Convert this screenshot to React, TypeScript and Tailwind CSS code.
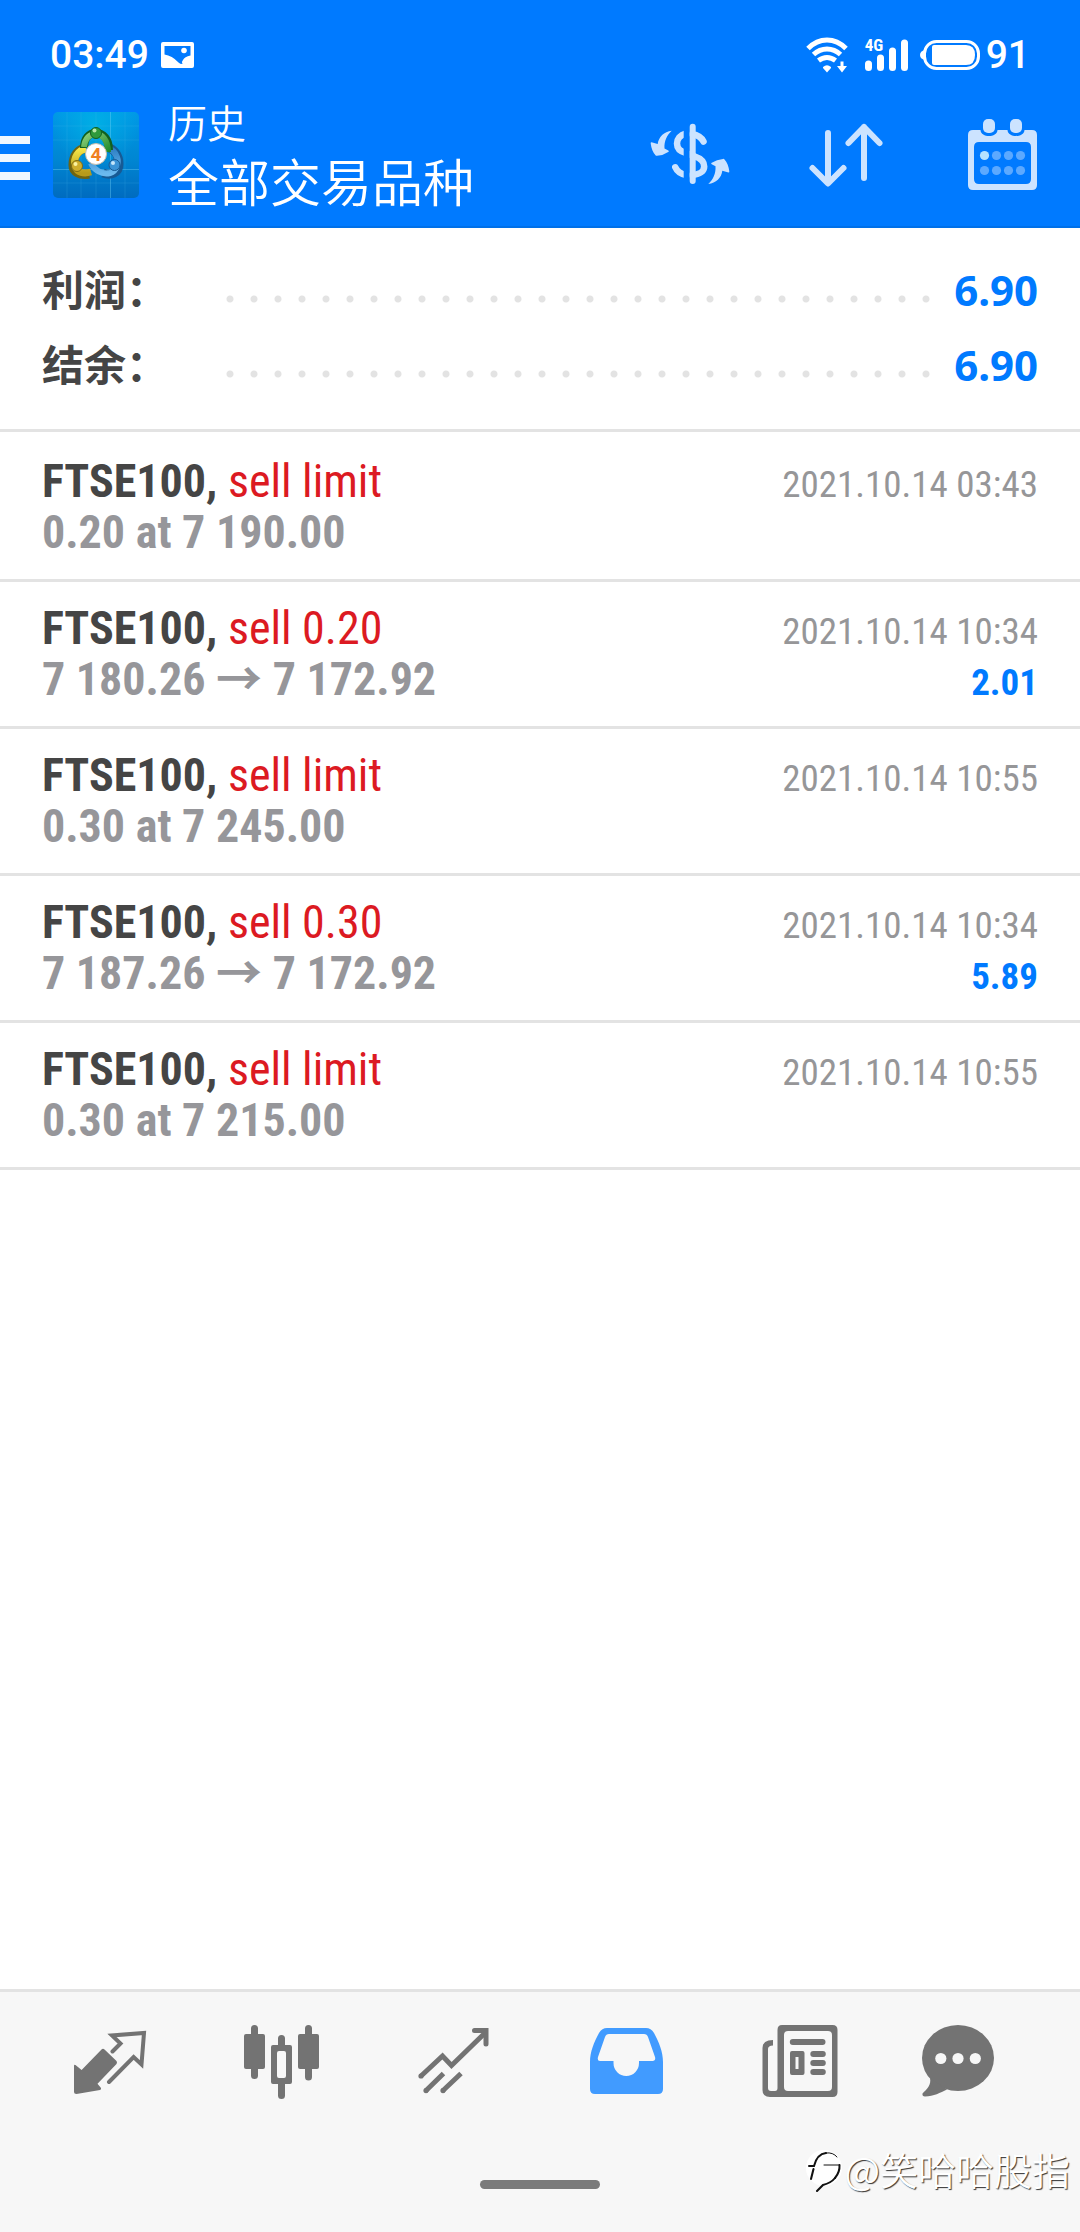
import type { ReactNode } from "react";

type Deal = {
  symbol: string;
  action: string;
  detail: string[];
  time: string;
  profit?: string;
};

const summary = [
  { label: "利润：", value: "6.90" },
  { label: "结余：", value: "6.90" },
];

const deals: Deal[] = [
  { symbol: "FTSE100,", action: "sell limit", detail: ["0.20 at 7 190.00"], time: "2021.10.14 03:43" },
  { symbol: "FTSE100,", action: "sell 0.20", detail: ["7 180.26", "7 172.92"], time: "2021.10.14 10:34", profit: "2.01" },
  { symbol: "FTSE100,", action: "sell limit", detail: ["0.30 at 7 245.00"], time: "2021.10.14 10:55" },
  { symbol: "FTSE100,", action: "sell 0.30", detail: ["7 187.26", "7 172.92"], time: "2021.10.14 10:34", profit: "5.89" },
  { symbol: "FTSE100,", action: "sell limit", detail: ["0.30 at 7 215.00"], time: "2021.10.14 10:55" },
];

function StatusBar() {
  return (
    <div className="flex h-[76px] items-center justify-between px-[50px] pt-[34px] font-['Roboto',sans-serif] text-[39px] leading-[42px] font-medium text-white">
      <div className="flex items-center gap-3">
        <span>03:49</span>
        <svg viewBox="0 0 33 26" className="h-[26px] w-[33px]" aria-hidden="true">
          <path
            fillRule="evenodd"
            fill="#fff"
            d="M2 0H31Q33 0 33 2V24Q33 26 31 26H2Q0 26 0 24V2Q0 0 2 0ZM3.500 4V12.500Q11 13.500 17.500 20.500Q19 22 21.500 22Q20 20 22 18Q23.500 14.500 29.500 13.500V4Z"
          />
          <circle cx="23" cy="8.500" r="2.800" fill="#fff" />
        </svg>
      </div>
      <div className="flex items-center">
        <svg viewBox="0 0 42 36" className="h-9 w-[42px]" aria-hidden="true">
          <g fill="none" stroke="#fff" strokeWidth="5">
            <path d="M2 11.500Q10.500 3 21 3T40 11.500" />
            <path d="M7.500 17.500Q13.500 12 21 12T34.500 17.500" />
            <path d="M12.500 23.500Q16.500 20.500 21 20.500T29.500 23.500" />
          </g>
          <path d="M17 30Q21 26.500 25 30V31L21 35.500L17 31Z" fill="#fff" />
          <path d="M34.500 24.500H37.500V29H41L36 35.500L31 29H34.500Z" fill="#fff" />
        </svg>
        <div className="relative ml-[17px]">
          <svg viewBox="0 0 44 34" className="h-[34px] w-[44px]" aria-hidden="true">
            <g stroke="#fff" strokeWidth="7" strokeLinecap="round">
              <path d="M3.500 26V29.500" />
              <path d="M15.500 20V29.500" />
              <path d="M27.500 13V29.500" />
              <path d="M39.500 5V29.500" />
            </g>
          </svg>
          <span className="absolute top-0 left-0 font-['Roboto_Condensed',sans-serif] text-[17px] leading-[14px] font-bold">
            4G
          </span>
        </div>
        <svg viewBox="0 0 60 30" className="ml-[11px] h-[30px] w-[60px]" aria-hidden="true">
          <rect x="4.500" y="1.500" width="54" height="27" rx="12" fill="none" stroke="#fff" strokeWidth="3" />
          <path d="M5 10Q0 11 0 15T5 20Z" fill="#fff" />
          <path d="M14 5H46Q55 5 55 15T46 25H14Q12 25 12 23V7Q12 5 14 5Z" fill="#fff" />
        </svg>
        <span className="ml-[6px]">91</span>
      </div>
    </div>
  );
}

function AppLogo() {
  return (
    <svg viewBox="0 0 86 86" className="ml-[23px] size-[86px] shrink-0" role="img" aria-label="MetaTrader 4">
      <defs>
        <linearGradient id="tile" x1="0" y1="0" x2="0" y2="1">
          <stop offset="0" stopColor="#0099e6" />
          <stop offset="0.550" stopColor="#0086d2" />
          <stop offset="1" stopColor="#006bbf" />
        </linearGradient>
        <radialGradient id="glow" cx="0.500" cy="0.150" r="0.500">
          <stop offset="0" stopColor="#00c0e8" stopOpacity="0.600" />
          <stop offset="1" stopColor="#00c0e8" stopOpacity="0" />
        </radialGradient>
        <linearGradient id="green" x1="0" y1="0" x2="1" y2="1">
          <stop offset="0" stopColor="#8fd07a" />
          <stop offset="1" stopColor="#1f8a2c" />
        </linearGradient>
        <linearGradient id="yellow" x1="0" y1="0" x2="0" y2="1">
          <stop offset="0" stopColor="#f5e648" />
          <stop offset="1" stopColor="#b79a1a" />
        </linearGradient>
        <linearGradient id="sky" x1="0" y1="0" x2="0" y2="1">
          <stop offset="0" stopColor="#2c7fc4" />
          <stop offset="1" stopColor="#6bb9ee" />
        </linearGradient>
      </defs>
      <rect width="86" height="86" rx="5" fill="url(#tile)" />
      <rect width="86" height="86" rx="5" fill="url(#glow)" />
      <path d="M14 0V86M28 0V86M43 0V86M72 0V86M0 14H86M0 28H86M0 71H86" stroke="#46b4ea" strokeOpacity="0.200" />
      <path d="M57.500 0V86M0 57.500H86" stroke="#6fd0f5" strokeOpacity="0.400" />
      <g fill="none">
        <path d="M50 61C58 64 66 61 66 52C66 43 61 37 54 35" stroke="#175a94" strokeWidth="9" />
        <path d="M38 51C41 58 49 63 57 61C64 59 66 50 64 45C62 40 59 37 54 36" stroke="url(#sky)" strokeWidth="6" />
        <path d="M36 62C27 64 20 60 20 53C20 44 25 37 33 36" stroke="#6d6413" strokeWidth="9" />
        <path d="M33 37C25 38 20 46 22 54C24 61 31 62 38 60" stroke="url(#yellow)" strokeWidth="7" />
        <path d="M31 36C31 26 36 21 43 21S56 27 56 38" stroke="#12601f" strokeWidth="8" />
        <path d="M31 35C32 26 37 22 43 22S55 28 55 40" stroke="url(#green)" strokeWidth="6" />
      </g>
      <circle cx="43" cy="21" r="5.500" fill="#2f9a3c" stroke="#12601f" />
      <circle cx="41.500" cy="18.500" r="2" fill="#b8e6a8" />
      <circle cx="24" cy="54" r="5.500" fill="#cfae2c" stroke="#7d6b14" />
      <circle cx="22.500" cy="52" r="2" fill="#fbf3a0" />
      <circle cx="61.500" cy="53" r="5.500" fill="#3b93d6" stroke="#175a94" />
      <circle cx="60" cy="51" r="2" fill="#c6e6fa" />
      <circle cx="43" cy="42" r="10.500" fill="#fff" stroke="#c9bfae" />
      <text x="43" y="49" textAnchor="middle" fontFamily="Roboto, sans-serif" fontSize="19" fontWeight="700" fill="#f08022">
        4
      </text>
    </svg>
  );
}

function HeaderButton({ label, viewBox, children }: { label: string; viewBox: string; children: ReactNode }) {
  return (
    <button type="button" aria-label={label} className="flex w-[156px] justify-center">
      <svg viewBox={viewBox} className="size-[90px]" aria-hidden="true">
        {children}
      </svg>
    </button>
  );
}

function TitleBar() {
  return (
    <div className="flex h-[152px] items-center border-b-2 border-[#0070e8] pt-2">
      <button type="button" aria-label="菜单" className="shrink-0">
        <svg viewBox="0 0 30 90" className="h-[90px] w-[30px]" aria-hidden="true">
          <path d="M0 26H30V34H0ZM0 44H30V52H0ZM0 62H30V70H0Z" fill="#f0f7ff" />
        </svg>
      </button>
      <AppLogo />
      <h1 className="ml-[29px] flex flex-1 flex-col font-['Roboto','Noto_Sans_CJK_SC',sans-serif] font-[350] text-white">
        <span className="text-[39px] leading-[60px]">历史</span>
        <span className="text-[51px] leading-[60px]">全部交易品种</span>
      </h1>
      <div className="flex shrink-0">
        <HeaderButton label="资金" viewBox="5 0 90 90">
          <defs>
            <clipPath id="dollar-halves">
              <path d="M0 0H43.700V90H0ZM49.700 0H100V90H49.700Z" />
            </clipPath>
          </defs>
          <g clipPath="url(#dollar-halves)" fill="none" stroke="#cce3ff" strokeWidth="6.500" strokeLinecap="round">
            <path d="M63.500 31.500Q60.500 25.500 52 24" />
            <path d="M46 23.500C40 25 37 29 37 33.500C37 38 40 41.500 46 43L55 46.500C61 48.500 64.200 52 64.200 56.500C64.200 61 60 64.500 52 65" />
            <path d="M35.300 57.300Q38 63.500 46 65" />
          </g>
          <path d="M52.700 16.700V71" stroke="#cce3ff" strokeWidth="6" strokeLinecap="round" />
          <g fill="#cce3ff">
            <path id="swap" d="M31.700 20.700C24 21.500 18.500 27 17.700 34L11.500 32.300Q10.500 32.300 10.700 33.500C11.300 38.500 13 42.500 15.500 45.200Q16 46 17 45.800Q23 45.500 28.700 41.700Q29 41 28.300 40.500L24.500 38.500C24 31 27 25 31.700 20.700Z" />
            <use href="#swap" transform="rotate(180 50 47.350)" />
          </g>
        </HeaderButton>
        <HeaderButton label="排序" viewBox="1 0 90 90">
          <g fill="none" stroke="#cce3ff" strokeWidth="6" strokeLinecap="round" strokeLinejoin="round">
            <path d="M28 23V73M12.500 58L28 73.500L43.500 58" />
            <path d="M64 68V17M48.500 33L64 17L79.500 33" />
          </g>
        </HeaderButton>
        <HeaderButton label="日期" viewBox="-3 0 90 90">
          <path
            fillRule="evenodd"
            fill="#cce3ff"
            d="M13 20H20.500C21 28 37 28 37.500 20H47.500C48 28 64 28 64.500 20H72Q77 20 77 25V75Q77 80 72 80H13Q8 80 8 75V25Q8 20 13 20ZM19 32Q14 32 14 37V69Q14 74 19 74H66Q71 74 71 69V37Q71 32 66 32Z"
          />
          <rect x="23" y="9" width="12" height="14" rx="5" fill="#cce3ff" />
          <rect x="50" y="9" width="12" height="14" rx="5" fill="#cce3ff" />
          <circle cx="24.500" cy="45.500" r="4.600" fill="#b5e2ff" />
          <g fill="#5ca9ff">
            <circle cx="36.500" cy="45.500" r="4.600" />
            <circle cx="48.500" cy="45.500" r="4.600" />
            <circle cx="60.500" cy="45.500" r="4.600" />
            <circle cx="24.500" cy="60.500" r="4.600" />
            <circle cx="36.500" cy="60.500" r="4.600" />
            <circle cx="48.500" cy="60.500" r="4.600" />
            <circle cx="60.500" cy="60.500" r="4.600" />
          </g>
        </HeaderButton>
      </div>
    </div>
  );
}

function DealRow({ deal }: { deal: Deal }) {
  return (
    <li className="border-b-[3px] border-[#e3e3e3] px-[42px] py-[21px] font-['Roboto_Condensed',sans-serif] text-[46px] leading-[51px]">
      <div className="flex h-[51px] items-baseline justify-between">
        <span>
          <span className="font-bold text-[#454545]">{deal.symbol}</span>{" "}
          <span className="text-[#dc1a22]">{deal.action}</span>
        </span>
        <time className="text-[37px] text-[#969698]">{deal.time}</time>
      </div>
      <div className="flex h-[51px] items-baseline justify-between font-bold">
        <span className="text-[#96969a]">
          {deal.detail[0]}
          {deal.detail[1] && (
            <>
              {" "}
              <span className="font-['Noto_Sans_CJK_SC',sans-serif] leading-[0]">→</span> {deal.detail[1]}
            </>
          )}
        </span>
        {deal.profit && <span className="text-[37px] text-[#007aff]">{deal.profit}</span>}
      </div>
    </li>
  );
}

function NavItem({ label, active, children }: { label: string; active?: boolean; children: ReactNode }) {
  return (
    <button
      type="button"
      aria-label={label}
      aria-current={active ? "page" : undefined}
      className={active ? "flex justify-center text-[#419bff]" : "flex justify-center text-[#737373]"}
    >
      <svg viewBox="0 0 96 96" className="size-24 overflow-visible" fill="currentColor" aria-hidden="true">
        {children}
      </svg>
    </button>
  );
}

function BottomNav() {
  return (
    <nav className="grid grid-cols-6 px-6">
      <NavItem label="行情">
        <path d="M12 50Q12 48 13.500 49L19.600 54L39.500 33.500Q41 32 42.500 33.500L54.500 45Q55.500 46.500 54.500 48L35.500 67.700L39 72Q39.500 73.500 38 74L14.500 78Q12 78 12 75.500Z" />
        <path
          d="M50.500 35.500L58.500 27.500L50 19.500L82 17L79.500 48.500L71.600 41L47 66"
          fill="none"
          stroke="currentColor"
          strokeWidth="4"
          strokeLinecap="round"
        />
      </NavItem>
      <NavItem label="图表">
        <rect x="10" y="18" width="21" height="35" rx="2" />
        <rect x="64" y="18" width="21" height="35" rx="2" />
        <g stroke="currentColor" strokeWidth="7" strokeLinecap="round">
          <path d="M20.500 12.500V59.500M74.500 12.500V61M47.500 22.500V30M47.500 67V79.500" />
        </g>
        <path
          fillRule="evenodd"
          d="M39 29H56Q58 29 58 31V66Q58 68 56 68H39Q37 68 37 66V31Q37 29 39 29ZM45 35Q43 35 43 37V60Q43 62 45 62H50Q52 62 52 60V37Q52 35 50 35Z"
        />
      </NavItem>
      <NavItem label="交易">
        <g fill="none" stroke="currentColor" strokeWidth="5">
          <path d="M14.500 60.500L36.500 40L45.500 49.500L80 16" />
          <path d="M68.500 14.500H80V28" strokeLinecap="round" />
          <path d="M19.600 75L37.500 57.500M36.500 75L55 57.500" />
        </g>
        <circle cx="15" cy="60" r="2.600" />
        <circle cx="20" cy="74.600" r="2.600" />
        <circle cx="37" cy="74.600" r="2.600" />
      </NavItem>
      <NavItem label="历史" active>
        <path
          fillRule="evenodd"
          d="M12 46C12 36 16 26 21 17Q24 12 29 12H68Q73 12 76 17C81 26 85 36 85 46V73Q85 78 80 78H17Q12 78 12 73ZM31 18Q28 18 27 21L20 41Q19 45 22 45H35.500V47A12.700 13 0 0 0 61 47V45H74.500Q78 45 77 41L70 21Q69 18 66 18Z"
        />
      </NavItem>
      <NavItem label="新闻">
        <path
          fillRule="evenodd"
          d="M32 9H82.500Q87.500 9 87.500 14V76Q87.500 81 82.500 81H20Q12.500 81 12.500 74V32Q12.500 24 23 24V29.500Q18 29.500 18 33V72Q18 75 21 75H25Q27.500 75 27.500 72V14Q27.500 9 32 9ZM38 15Q34 15 34 19V71Q34 75 38 75H78Q82 75 82 71V19Q82 15 78 15ZM42 35H52.500Q54.500 35 54.500 37V57Q54.500 59 52.500 59H42Q40 59 40 57V37Q40 35 42 35ZM45.500 41V53H48.500V41Z"
        />
        <g stroke="currentColor" strokeWidth="6" strokeLinecap="round">
          <path d="M42.800 26H72.500M63.300 38H72.800M63.300 47H72.800M63.300 56H72.800" />
        </g>
      </NavItem>
      <NavItem label="消息">
        <ellipse cx="36" cy="42" rx="36" ry="33" />
        <path d="M8 62C9.500 69 5 73 0.500 77.500Q0 80.500 3 80.500C12 80 18 77 25 73.500Z" />
        <g fill="#f7f7f7">
          <circle cx="18.800" cy="42.500" r="5.600" />
          <circle cx="36" cy="42.500" r="5.600" />
          <circle cx="53.300" cy="42.500" r="5.600" />
        </g>
      </NavItem>
    </nav>
  );
}

function Watermark() {
  return (
    <div className="absolute right-[10px] bottom-[40px] flex items-center">
      <svg viewBox="0 0 40 46" className="h-[46px] w-10" aria-hidden="true">
        <circle cx="20" cy="22" r="18" fill="#fff" />
        <g fill="none" stroke="#111" strokeLinecap="round">
          <path d="M5 20H10Q13 8 22 7" strokeWidth="2" />
          <path d="M22 7Q29 6 33 11" strokeWidth="1" />
          <path d="M35.500 19Q36 26 31 32" strokeWidth="2" />
          <path d="M31 32Q27 37 19 39L13 45" strokeWidth="2" />
          <path d="M9.500 23L7 33" strokeWidth="2" />
          <path d="M20 19H35" strokeWidth="1" />
        </g>
      </svg>
      <span className="font-['Noto_Sans_CJK_SC',sans-serif] text-[38px] leading-[46px] font-[350] text-white [text-shadow:1px_1px_1px_#333]">
        @笑哈哈股指
      </span>
    </div>
  );
}

export default function App() {
  return (
    <div className="flex min-h-screen flex-col bg-white">
      <header className="bg-[#007aff]">
        <StatusBar />
        <TitleBar />
      </header>
      <main className="flex-1">
        <dl className="border-b-[3px] border-[#e3e3e3] px-[42px] pt-6 pb-[27px]">
          {summary.map((row) => (
            <div key={row.label} className="flex h-[75px] items-center text-[42px] leading-[60px] font-bold">
              <dt className="w-44 shrink-0 pb-1 font-['Noto_Sans_CJK_SC',sans-serif] text-[#454545]">{row.label}</dt>
              <dd className="flex flex-1 items-center gap-4">
                <span className="h-[75px] flex-1 bg-[radial-gradient(circle_at_12px_47px,#e3e3e3_3px,transparent_4px)] bg-[size:24px_75px]" />
                <span className="font-['Noto_Sans',sans-serif] text-[#007aff]">{row.value}</span>
              </dd>
            </div>
          ))}
        </dl>
        <ul className="pt-[3px]">
          {deals.map((deal, index) => (
            <DealRow key={index} deal={deal} />
          ))}
        </ul>
      </main>
      <footer className="relative border-t-[3px] border-[#e3e3e3] bg-[#f7f7f7] pt-6 pb-[43px]">
        <BottomNav />
        <div className="mx-auto mt-[68px] h-[9px] w-[120px] rounded-full bg-[#7b7b7b]" />
        <Watermark />
      </footer>
    </div>
  );
}
